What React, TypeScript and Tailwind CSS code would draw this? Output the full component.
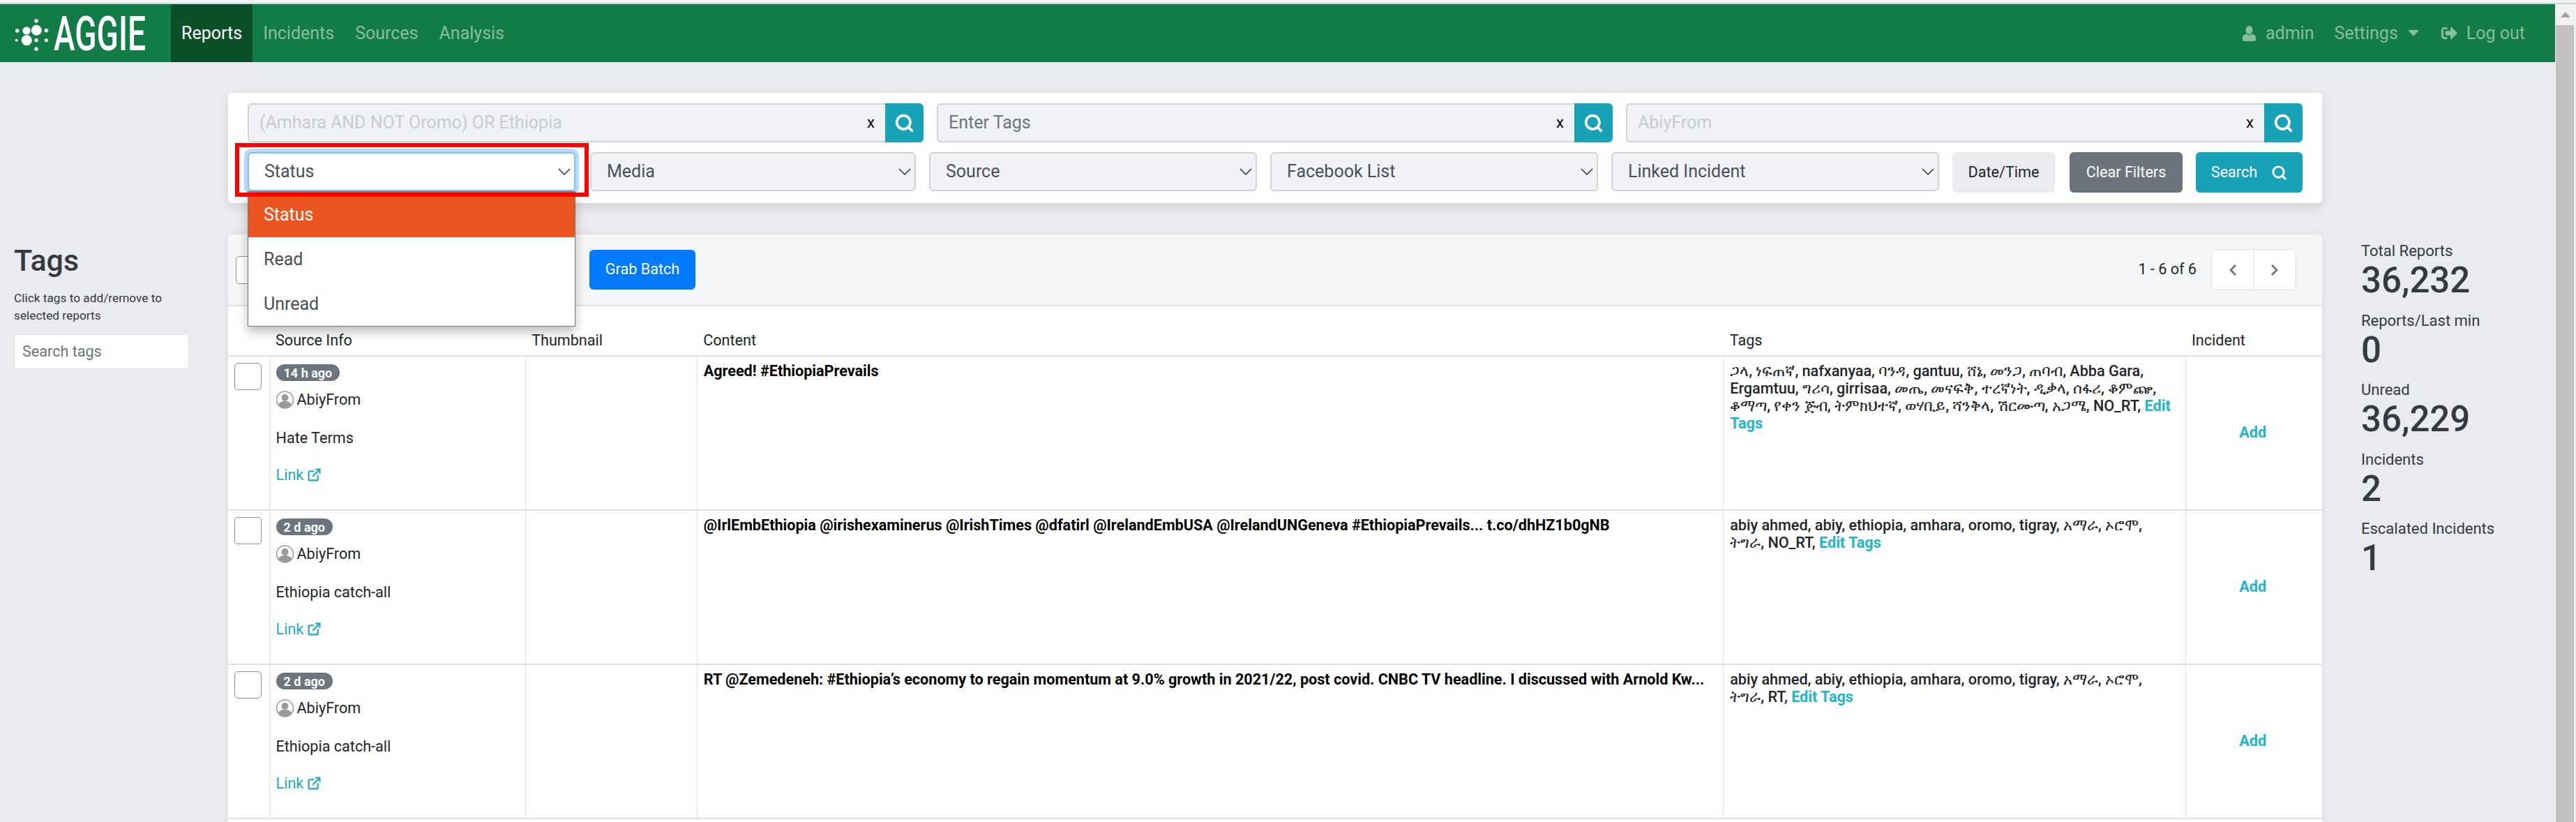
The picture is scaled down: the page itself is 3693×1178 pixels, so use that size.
import { Search } from "lucide-react";
import { FaChevronLeft, FaChevronRight, FaSignOutAlt } from "react-icons/fa";
import { FiExternalLink } from "react-icons/fi";

const rows = [
  {
    age: "14 h ago",
    source: "Hate Terms",
    content: "Agreed! #EthiopiaPrevails",
    tags: "ጋላ, ነፍጠኛ, nafxanyaa, ባንዳ, gantuu, ሸኔ, መንጋ, ጠባብ, Abba Gara, Ergamtuu, ግሪሳ, girrisaa, መጤ, መናፍቅ, ተረኛነት, ዲቃላ, ሰፋሪ, ቆምጬ, ቆማጣ, የቀን ጅብ, ትምክህተኛ, ወሃቢይ, ሻንቅላ, ሽርሙጣ, አጋሜ, NO_RT,",
  },
  {
    age: "2 d ago",
    source: "Ethiopia catch-all",
    content:
      "@IrlEmbEthiopia @irishexaminerus @IrishTimes @dfatirl @IrelandEmbUSA @IrelandUNGeneva #EthiopiaPrevails... t.co/dhHZ1b0gNB",
    tags: "abiy ahmed, abiy, ethiopia, amhara, oromo, tigray, አማራ, ኦሮሞ, ትግራ, NO_RT,",
  },
  {
    age: "2 d ago",
    source: "Ethiopia catch-all",
    content:
      "RT @Zemedeneh: #Ethiopia’s economy to regain momentum at 9.0% growth in 2021/22, post covid. CNBC TV headline. I discussed with Arnold Kw...",
    tags: "abiy ahmed, abiy, ethiopia, amhara, oromo, tigray, አማራ, ኦሮሞ, ትግራ, RT,",
  },
];

const stats = [
  ["Total Reports", "36,232"],
  ["Reports/Last min", "0"],
  ["Unread", "36,229"],
  ["Incidents", "2"],
  ["Escalated Incidents", "1"],
];

function Logo() {
  return (
    <svg width="245" height="83" viewBox="0 0 245 83" className="shrink-0">
      <g fill="#fff" transform="translate(0 -6)">
        <circle cx="52.3" cy="43.3" r="7.5" />
        <circle cx="38" cy="44" r="5.7" />
        <circle cx="38.3" cy="57.7" r="7.5" />
        <circle cx="52" cy="30" r="2.7" />
        <circle cx="24.7" cy="44" r="2.7" />
        <circle cx="66.3" cy="43.7" r="2.7" />
        <circle cx="23.7" cy="57.7" r="2" />
        <circle cx="52" cy="57.7" r="2.7" />
        <circle cx="66.3" cy="57.7" r="2.5" />
        <circle cx="52" cy="70.3" r="2.7" />
        <text x="77" y="72" fontSize="69" fontWeight="500" textLength="132" lengthAdjust="spacingAndGlyphs">
          AGGIE
        </text>
      </g>
    </svg>
  );
}

function UserIcon() {
  return (
    <svg width="19" height="22" viewBox="0 0 19 22" fill="currentColor" className="shrink-0">
      <ellipse cx="9.500" cy="6" rx="5" ry="6" />
      <path d="M6 11.500c-3 .8-6 2.200-6 5.500v3c0 1 .8 2 2 2h15c1.200 0 2-1 2-2v-3c0-3.300-3-4.700-6-5.500-1 1.200-2.200 1.800-3.500 1.800s-2.500-.6-3.500-1.800z" />
    </svg>
  );
}

function Caret() {
  return (
    <svg width="18" height="10" viewBox="0 0 18 10" fill="none" stroke="#343a40" strokeWidth="1.6" className="shrink-0">
      <polyline points="1,1 9,9 17,1" />
    </svg>
  );
}

function SearchField({ placeholder, light, width }: { placeholder: string; light?: boolean; width: string }) {
  return (
    <div className={`flex h-[56px] ${width}`}>
      <div className="flex flex-1 items-center justify-between rounded-l-[6px] border-2 border-r-0 border-[#ced4da] bg-[#f1f2f5] pl-[15px] pr-[15px]">
        <span className={light ? "text-[#c8ccd2]" : "text-[#6c757d]"}>{placeholder}</span>
        <span className="text-[22px] leading-none text-black">x</span>
      </div>
      <div className="flex w-[55px] items-center justify-center rounded-r-[6px] bg-[#17a2b8]">
        <Search size={29} strokeWidth={3} className="text-white" />
      </div>
    </div>
  );
}

function SelectBox({ label, width }: { label: string; width: string }) {
  return (
    <div className={`flex h-[56px] items-center justify-between rounded-[6px] border-2 border-[#ced4da] bg-[#f1f2f5] pl-[22px] pr-[5px] text-[#495057] ${width}`}>
      <span>{label}</span>
      <Caret />
    </div>
  );
}

function Avatar() {
  return (
    <svg width="25" height="26" viewBox="0 0 25 26" className="shrink-0">
      <circle cx="12.5" cy="13" r="12" fill="#fff" stroke="#9a9a9a" strokeWidth="1.6" />
      <circle cx="12.5" cy="10" r="5" fill="#9a9a9a" />
      <path d="M3 21c1-5 5-6 9.5-6s8.500 1 9.500 6c-2.500 2.600-5.800 4-9.500 4s-7-1.400-9.500-4z" fill="#9a9a9a" />
    </svg>
  );
}

function ReportRow({ age, source, content, tags }: (typeof rows)[number]) {
  return (
    <tr className="h-[221px] border-b-2 border-[#dee2e6] align-top">
      <td className="border-r border-[#dee2e6] p-[9px]">
        <div className="h-[39px] w-[39px] rounded-[5px] border border-[#8f8f8f] bg-white" />
      </td>
      <td className="border-r border-[#dee2e6] px-[9px] pt-[11px] text-[#212529]">
        <span className="flex h-[24px] w-fit items-center rounded-full bg-[#6c757d] px-[11px] text-[18px] font-bold text-white">{age}</span>
        <div className="mt-[14px] flex h-[26px] items-center gap-[5px]">
          <Avatar />
          <span>AbiyFrom</span>
        </div>
        <div className="mt-[29px] leading-[25px]">{source}</div>
        <div className="mt-[28px] flex items-center gap-[5px] leading-[25px] text-[#1fa9c0]">
          Link
          <FiExternalLink size={21} strokeWidth={2.5} />
        </div>
      </td>
      <td className="border-r border-[#dee2e6]" />
      <td className="border-r border-[#dee2e6] px-[9px] py-[8px] font-bold leading-[25px] text-black">{content}</td>
      <td className="border-r border-[#dee2e6] px-[9px] py-[8px] font-medium leading-[25px] text-[#212529]">
        {tags} <span className="font-bold text-[#1fb5c9]">Edit Tags</span>
      </td>
      <td className="pr-[4px] text-center align-middle font-bold text-[#1fb5c9]">Add</td>
    </tr>
  );
}

export default function App() {
  return (
    <div className="flex h-[1178px] flex-col overflow-hidden bg-[#e9ebef] font-[Roboto,'Noto_Sans',sans-serif] text-[21.6px] text-[#212529]">
      <div className="h-[6px] shrink-0 border-b-2 border-[#ccd3dc] bg-[#f0f2f6]" />
      <div className="flex min-h-0 flex-1">
        <div className="flex min-w-0 flex-1 flex-col">
          <nav className="flex h-[83px] shrink-0 items-center justify-between bg-[#117c46] pr-[43px] text-[25px] text-[#88bda2]">
            <div className="flex h-full items-center">
              <Logo />
              <a className="flex h-full items-center bg-[#0c5029] px-[15px] text-white">Reports</a>
              <a className="px-[15px]">Incidents</a>
              <a className="px-[15px]">Sources</a>
              <a className="px-[15px]">Analysis</a>
            </div>
            <div className="flex items-center">
              <UserIcon />
              <span className="ml-[14px]">admin</span>
              <span className="ml-[29px]">Settings</span>
              <span className="ml-[14px] h-0 w-0 border-x-[8px] border-t-[9px] border-x-transparent border-t-[#88bda2]" />
              <FaSignOutAlt size={23} className="ml-[32px]" />
              <span className="ml-[13px]">Log out</span>
            </div>
          </nav>

          <div className="flex min-h-0 flex-1">
            <aside className="w-[327px] shrink-0 pl-[20px] pr-[56px] pt-[258px]">
              <h2 className="text-[43px] font-medium leading-[52px] text-[#343a40]">Tags</h2>
              <p className="mt-[16px] text-[17.3px] leading-[25px] text-[#343a40]">Click tags to add/remove to selected reports</p>
              <div className="mt-[14px] flex h-[50px] items-center rounded-[5px] border border-[#dee2e6] bg-white px-[11px] text-[#6c757d]">Search tags</div>
            </aside>

            <main className="flex w-[3002px] shrink-0 flex-col gap-[45px] pt-[44px]">
              <section className="flex h-[158px] shrink-0 flex-col gap-[14px] rounded-[6px] bg-white px-[28px] py-[15px] text-[25px] shadow-[0_6px_14px_rgba(0,0,0,0.1)]">
                <div className="flex gap-[19px]">
                  <SearchField placeholder="(Amhara AND NOT Oromo) OR Ethiopia" light width="w-[969px]" />
                  <SearchField placeholder="Enter Tags" width="w-[969px]" />
                  <SearchField placeholder="AbiyFrom" light width="w-[970px]" />
                </div>
                <div className="flex gap-[19px]">
                  <div className="relative z-10 h-[56px] w-[470px]">
                    <div className="flex h-full items-center justify-between rounded-[6px] border-2 border-[#80bdff] bg-white pl-[22px] pr-[5px] text-[#495057] shadow-[0_0_0_5px_#b9dafe]">
                      <span>Status</span>
                      <Caret />
                    </div>
                    <div className="absolute left-0 top-[56px] w-[470px] border border-[#777] bg-white text-[#495057] shadow-[0_8px_14px_rgba(0,0,0,0.25)]">
                      <div className="flex h-[65px] items-center bg-[#ea5520] pl-[22px] text-white">Status</div>
                      <div className="flex h-[64px] items-center pl-[22px]">Read</div>
                      <div className="flex h-[63px] items-center pl-[22px]">Unread</div>
                    </div>
                    <div className="absolute left-[-18px] top-[-13px] h-[77px] w-[507px] border-[6px] border-[#fe0000]" />
                  </div>
                  <SelectBox label="Media" width="ml-[2px] w-[467px]" />
                  <SelectBox label="Source" width="w-[470px]" />
                  <SelectBox label="Facebook List" width="w-[470px]" />
                  <SelectBox label="Linked Incident" width="w-[470px]" />
                  <div className="flex h-[58px] w-[147px] items-center justify-center rounded-[6px] bg-[#e9ebef] text-[21.6px] text-[#212529]">Date/Time</div>
                  <div className="ml-[2px] flex h-[58px] w-[162px] items-center justify-center rounded-[6px] bg-[#6c757d] text-[21.6px] text-white">Clear Filters</div>
                  <div className="flex h-[58px] w-[153px] items-center justify-center gap-[20px] rounded-[6px] bg-[#17a2b8] text-[21.6px] text-white">
                    Search
                    <Search size={23} strokeWidth={3} />
                  </div>
                </div>
              </section>

              <section className="min-h-0 flex-1 rounded-t-[6px] bg-white shadow-[0_0_10px_rgba(0,0,0,0.08)]">
                <div className="flex h-[103px] items-center justify-between rounded-t-[6px] border-b-2 border-[#dee2e6] bg-[#f5f6f8] pl-[11px] pr-[37px]">
                  <div className="flex items-center">
                    <div className="h-[40px] w-[40px] rounded-[5px] border border-[#8f8f8f] bg-white" />
                    <div className="ml-[467px] flex h-[57px] w-[152px] items-center justify-center rounded-[6px] bg-[#007bff] text-white">Grab Batch</div>
                  </div>
                  <div className="flex items-center gap-[21px]">
                    <span>1 - 6 of 6</span>
                    <div className="flex h-[59px] w-[122px] rounded-[7px] border border-[#dee2e6] bg-white text-[#6c757d]">
                      <div className="flex flex-1 items-center justify-center border-r border-[#dee2e6]">
                        <FaChevronLeft size={18} />
                      </div>
                      <div className="flex flex-1 items-center justify-center">
                        <FaChevronRight size={18} />
                      </div>
                    </div>
                  </div>
                </div>
                <table className="w-full table-fixed border-collapse">
                  <colgroup>
                    <col className="w-[59px]" />
                    <col className="w-[367px]" />
                    <col className="w-[246px]" />
                    <col className="w-[1471px]" />
                    <col className="w-[663px]" />
                    <col className="w-[195px]" />
                  </colgroup>
                  <thead>
                    <tr className="h-[71px] border-b-2 border-[#dee2e6] align-bottom">
                      <th />
                      <th className="px-[9px] pb-[9px] text-left font-normal leading-[25px]">Source Info</th>
                      <th className="px-[9px] pb-[9px] text-left font-normal leading-[25px]">Thumbnail</th>
                      <th className="px-[9px] pb-[9px] text-left font-normal leading-[25px]">Content</th>
                      <th className="px-[9px] pb-[9px] text-left font-normal leading-[25px]">Tags</th>
                      <th className="px-[8px] pb-[9px] text-left font-normal leading-[25px]">Incident</th>
                    </tr>
                  </thead>
                  <tbody>
                    {rows.map((row, i) => (
                      <ReportRow key={i} {...row} />
                    ))}
                  </tbody>
                </table>
              </section>
            </main>

            <aside className="flex flex-1 flex-col pl-[56px] pt-[258px] text-[#343a40]">
              {stats.map(([label, value]) => (
                <div key={label} className="h-[99.5px]">
                  <div className="text-[22px] leading-[26px]">{label}</div>
                  <div className="text-[51px] font-medium leading-[58px]">{value}</div>
                </div>
              ))}
            </aside>
          </div>
        </div>

        <div className="flex w-[30px] shrink-0 flex-col items-center bg-[#f1f1f1]">
          <div className="flex h-[30px] w-full shrink-0 items-center justify-center">
            <span className="h-0 w-0 border-x-[7px] border-b-[8px] border-x-transparent border-b-[#a3a3a3]" />
          </div>
          <div className="ml-[-2px] w-[26px] flex-1 bg-[#c1c1c1]" />
        </div>
      </div>
    </div>
  );
}
